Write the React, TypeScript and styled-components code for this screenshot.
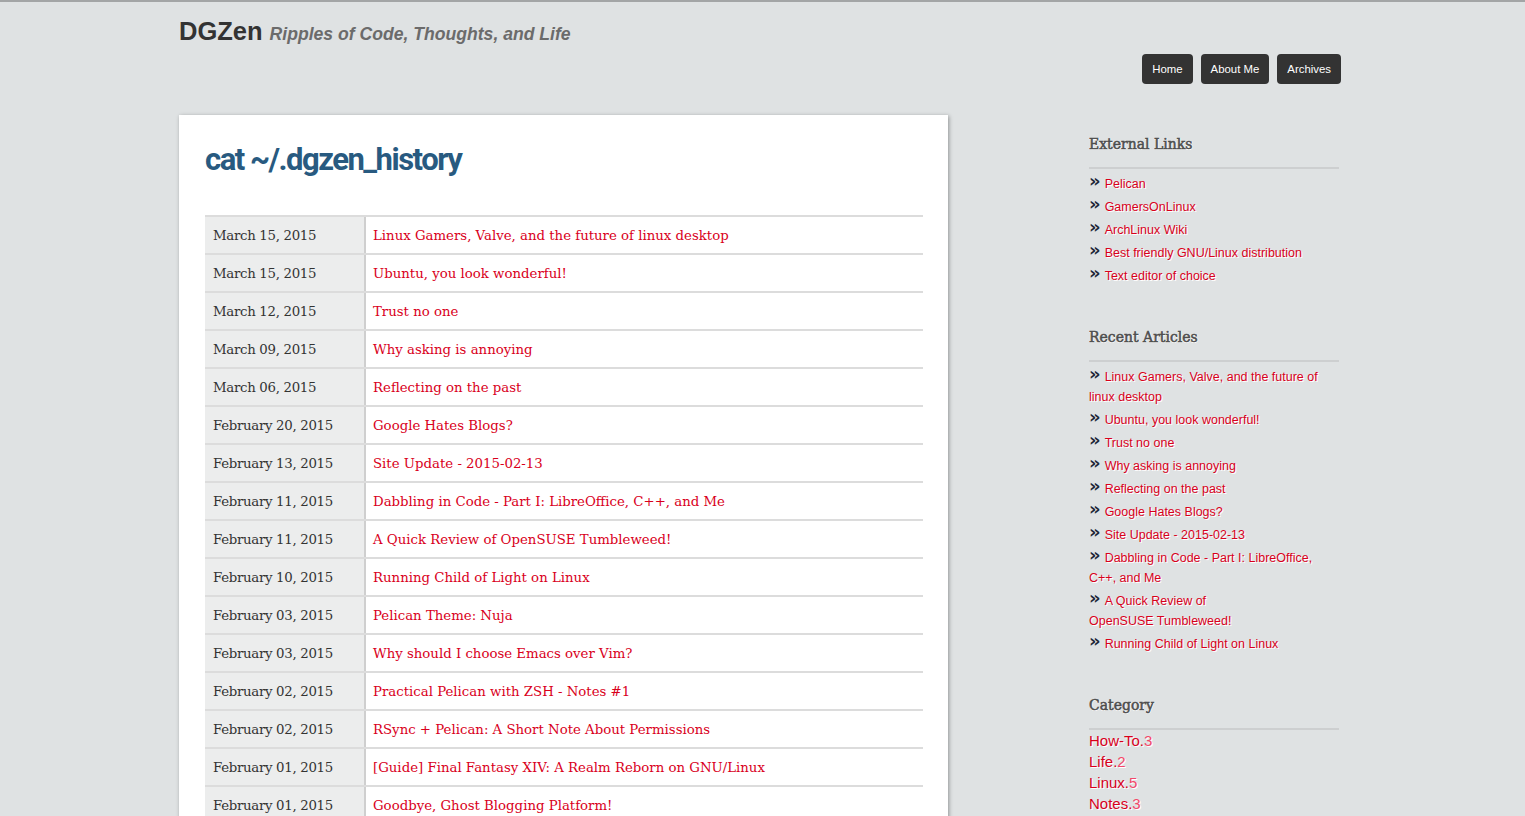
import React from "react";
import styled, { createGlobalStyle } from "styled-components";

const Global = createGlobalStyle`
  html, body { margin: 0; padding: 0; }
  body {
    background: #dfe2e3;
    border-top: 2px solid #a3a5a6;
    font-family: "Liberation Sans", Arial, sans-serif;
  }
  a { text-decoration: none; }
`;

const Page = styled.div`
  width: 1162px;
  margin: 0 auto;
  padding-right: 5px;
`;

const Header = styled.header`
  display: flex;
  flex-direction: column;
  padding-top: 15px;
`;

const Brand = styled.div`
  display: flex;
  align-items: baseline;
  gap: 7px;
`;

const Logo = styled.span`
  font-size: 25.5px;
  font-weight: bold;
  color: #333;
`;

const Tagline = styled.span`
  font-size: 17.6px;
  font-weight: bold;
  font-style: italic;
  color: #6b6b6b;
`;

const Nav = styled.nav`
  display: flex;
  justify-content: flex-end;
  gap: 8px;
  margin-top: 8px;
`;

const NavButton = styled.a`
  display: flex;
  align-items: center;
  height: 30px;
  padding: 0 10px;
  background: #333;
  color: #fff;
  font-size: 11.4px;
  border-radius: 4px;
`;

const Body = styled.div`
  display: flex;
  align-items: flex-start;
  margin-top: 31px;
`;

const Card = styled.main`
  width: 718px;
  background: #fff;
  padding: 25px 25px 0 26px;
  box-shadow: 1px 1px 4px rgba(0, 0, 0, 0.35);
`;

const Title = styled.h1`
  margin: 0 0 35px 0;
  font-family: Roboto, sans-serif;
  font-weight: 700;
  font-size: 31px;
  letter-spacing: -1.5px;
  color: #285a80;
  line-height: 40px;
`;

const Table = styled.div`
  display: flex;
  flex-direction: column;
  border-top: 2px solid #dcdcdc;
`;

const Row = styled.div`
  display: grid;
  grid-template-columns: 161px 1fr;
  height: 36px;
  border-bottom: 2px solid #dcdcdc;
  font-family: "DejaVu Serif", serif;
  font-size: 13.3px;
`;

const DateCell = styled.div`
  display: flex;
  align-items: center;
  padding: 0 8px;
  background: #eceded;
  border-right: 2px solid #cfcfcf;
  color: #333;
  letter-spacing: -0.3px;
`;

const LinkCell = styled.a`
  display: flex;
  align-items: center;
  padding: 0 7px;
  color: #d9001b;
`;

const Sidebar = styled.aside`
  width: 250px;
  margin-left: 141px;
  margin-top: 21px;
  display: flex;
  flex-direction: column;
  gap: 40px;
`;

const Section = styled.section`
  display: flex;
  flex-direction: column;
`;

const SectionTitle = styled.h3`
  margin: 0;
  padding-bottom: 14px;
  border-bottom: 2px solid #cdcfd0;
  font-family: "DejaVu Serif", serif;
  font-size: 14px;
  font-weight: normal;
  line-height: 17px;
  color: #4e4e4e;
  text-shadow: 0 1px 0 #fff, 1px 0 0 #fff;
  -webkit-text-stroke: 0.55px #4e4e4e;
`;

const List = styled.ul`
  list-style: none;
  margin: 5px 0 0 0;
  padding: 0;
`;

const Item = styled.li`
  font-size: 12.5px;
  line-height: 20px;
  margin-bottom: 3px;
  color: #d9001b;
  text-shadow: 1px 1px 0 #fff;
  white-space: pre-line;
`;

const Chevron = styled.span`
  display: inline-block;
  color: #1c2636;
  font-family: "DejaVu Sans", sans-serif;
  font-weight: bold;
  font-size: 18px;
  line-height: 10px;
  vertical-align: 1px;
  margin-right: 4px;
  text-shadow: none;
`;

const ItemLink = styled.a`
  color: #d9001b;
`;

const CatList = styled.ul`
  list-style: none;
  margin: 0;
  padding: 0;
`;

const CatItem = styled.li`
  font-size: 15px;
  line-height: 21px;
  text-shadow: 1px 1px 0 #fff;
`;

const CatName = styled.a`
  color: #d9001b;
`;

const CatCount = styled.span`
  color: #f3486a;
`;

const posts: [string, string][] = [
  ["March 15, 2015", "Linux Gamers, Valve, and the future of linux desktop"],
  ["March 15, 2015", "Ubuntu, you look wonderful!"],
  ["March 12, 2015", "Trust no one"],
  ["March 09, 2015", "Why asking is annoying"],
  ["March 06, 2015", "Reflecting on the past"],
  ["February 20, 2015", "Google Hates Blogs?"],
  ["February 13, 2015", "Site Update - 2015-02-13"],
  ["February 11, 2015", "Dabbling in Code - Part I: LibreOffice, C++, and Me"],
  ["February 11, 2015", "A Quick Review of OpenSUSE Tumbleweed!"],
  ["February 10, 2015", "Running Child of Light on Linux"],
  ["February 03, 2015", "Pelican Theme: Nuja"],
  ["February 03, 2015", "Why should I choose Emacs over Vim?"],
  ["February 02, 2015", "Practical Pelican with ZSH - Notes #1"],
  ["February 02, 2015", "RSync + Pelican: A Short Note About Permissions"],
  ["February 01, 2015", "[Guide] Final Fantasy XIV: A Realm Reborn on GNU/Linux"],
  ["February 01, 2015", "Goodbye, Ghost Blogging Platform!"],
  ["January 31, 2015", "Hello World"],
];

const external = [
  "Pelican",
  "GamersOnLinux",
  "ArchLinux Wiki",
  "Best friendly GNU/Linux distribution",
  "Text editor of choice",
];

const recent = [
  "Linux Gamers, Valve, and the future of linux desktop",
  "Ubuntu, you look wonderful!",
  "Trust no one",
  "Why asking is annoying",
  "Reflecting on the past",
  "Google Hates Blogs?",
  "Site Update - 2015-02-13",
  "Dabbling in Code - Part I: LibreOffice, C++, and Me",
  "A Quick Review of\nOpenSUSE Tumbleweed!",
  "Running Child of Light on Linux",
];

const categories: [string, number][] = [
  ["How-To", 3],
  ["Life", 2],
  ["Linux", 5],
  ["Notes", 3],
];

export default function App() {
  return (
    <>
      <Global />
      <Page>
        <Header>
          <Brand>
            <Logo>DGZen</Logo>
            <Tagline>Ripples of Code, Thoughts, and Life</Tagline>
          </Brand>
          <Nav>
            <NavButton href="#">Home</NavButton>
            <NavButton href="#">About Me</NavButton>
            <NavButton href="#">Archives</NavButton>
          </Nav>
        </Header>
        <Body>
          <Card>
            <Title>cat ~/.dgzen_history</Title>
            <Table>
              {posts.map(([d, t], i) => (
                <Row key={i}>
                  <DateCell>{d}</DateCell>
                  <LinkCell href="#">{t}</LinkCell>
                </Row>
              ))}
            </Table>
          </Card>
          <Sidebar>
            <Section>
              <SectionTitle>External Links</SectionTitle>
              <List>
                {external.map((e) => (
                  <Item key={e}>
                    <Chevron>»</Chevron>
                    <ItemLink href="#">{e}</ItemLink>
                  </Item>
                ))}
              </List>
            </Section>
            <Section>
              <SectionTitle>Recent Articles</SectionTitle>
              <List>
                {recent.map((e) => (
                  <Item key={e}>
                    <Chevron>»</Chevron>
                    <ItemLink href="#">{e}</ItemLink>
                  </Item>
                ))}
              </List>
            </Section>
            <Section>
              <SectionTitle>Category</SectionTitle>
              <CatList>
                {categories.map(([n, c]) => (
                  <CatItem key={n}>
                    <CatName href="#">{n}.</CatName>
                    <CatCount>{c}</CatCount>
                  </CatItem>
                ))}
              </CatList>
            </Section>
          </Sidebar>
        </Body>
      </Page>
    </>
  );
}
